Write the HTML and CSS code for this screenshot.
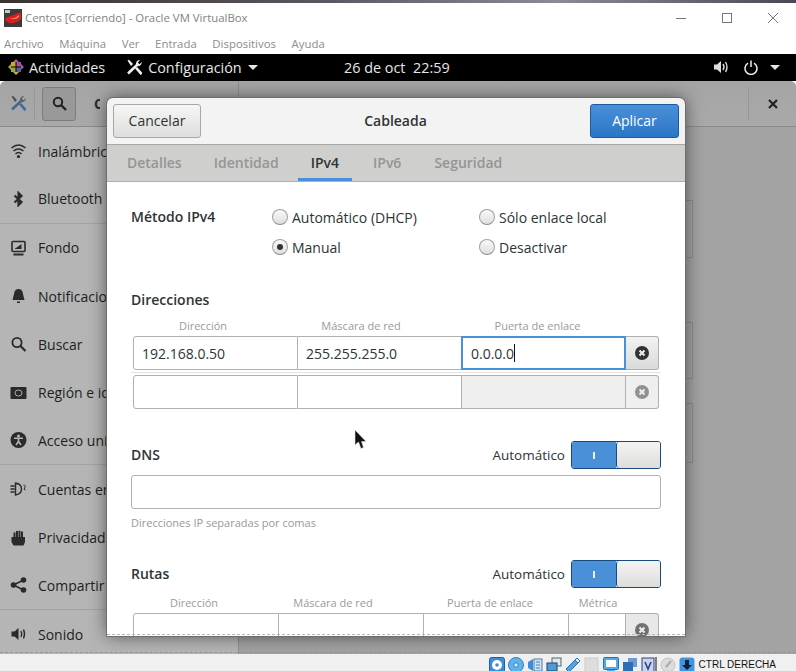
FILE: index.html
```html
<!DOCTYPE html>
<html lang="es">
<head>
    <meta charset="UTF-8">
    <meta name="viewport" content="width=device-width, initial-scale=1.0">
    <title>Centos [Corriendo] - Oracle VM VirtualBox</title>
    <link rel="stylesheet" href="styles.css">
</head>
<body>
    <div class="vm">
        <div class="wallpaper"></div>

        <div class="titlebar">
            <svg class="vbox-logo" width="18" height="18" viewBox="0 0 18 18">
                <rect width="18" height="18" fill="#3c3a3a"/>
                <rect x="1" y="1" width="5" height="3" fill="#c9c9c9"/>
                <path d="M1 9 L12 5 L17 3 L17 10 Q12 15 5 14 Q2 13 1 9Z" fill="#d9201c"/>
                <path d="M5 9 Q10 11 15 6 L15 8 Q10 12 5 9Z" fill="#f28a80"/>
            </svg>
            <span class="titlebar-text">Centos [Corriendo] - Oracle VM VirtualBox</span>
            <div class="window-buttons">
                <svg width="12" height="12" viewBox="0 0 12 12"><path d="M1 6.5H11" stroke="#777" fill="none"/></svg>
                <svg width="12" height="12" viewBox="0 0 12 12"><rect x="1.5" y="1.5" width="9" height="9" stroke="#777" fill="none"/></svg>
                <svg width="12" height="12" viewBox="0 0 12 12"><path d="M1 1L11 11M11 1L1 11" stroke="#777" fill="none"/></svg>
            </div>
        </div>

        <div class="menubar">
            <span>Archivo</span>
            <span>Máquina</span>
            <span>Ver</span>
            <span>Entrada</span>
            <span>Dispositivos</span>
            <span>Ayuda</span>
        </div>

        <div class="topbar">
            <div class="topbar-left">
                <svg width="16" height="16" viewBox="0 0 16 16">
                    <path d="M8 0L11 3H5Z" fill="#9b5fa6"/>
                    <path d="M16 8L13 11V5Z" fill="#9b5fa6"/>
                    <path d="M8 16L5 13H11Z" fill="#c9b037"/>
                    <path d="M0 8L3 5V11Z" fill="#8fae3a"/>
                    <rect x="3" y="3" width="4.5" height="4.5" fill="#c9a93a"/>
                    <rect x="8.5" y="3" width="4.5" height="4.5" fill="#a24f9c"/>
                    <rect x="3" y="8.5" width="4.5" height="4.5" fill="#8fae3a"/>
                    <rect x="8.5" y="8.5" width="4.5" height="4.5" fill="#52659e"/>
                </svg>
                <span class="activities">Actividades</span>
                <svg class="app-icon" width="17" height="17" viewBox="0 0 17 17">
                    <path d="M1.5 1.5L3 0.8L7 5L5 7Z" fill="#eee"/>
                    <path d="M9 9.5L11 8L16 13.5Q16.5 15.5 14.5 16Z" fill="#eee"/>
                    <path d="M11 6L2 14.5" stroke="#eee" stroke-width="2.6"/>
                    <path d="M10 6Q9.5 2 13 1L14 1.2L11.8 3.4L13.6 5.2L15.8 3Q16 6.5 12 7.2Z" fill="#eee"/>
                </svg>
                <span>Configuración</span>
                <span class="arrow"></span>
            </div>
            <div class="clock">26 de oct&nbsp; 22:59</div>
            <div class="topbar-right">
                <svg width="16" height="14" viewBox="0 0 16 14">
                    <path d="M0 4.5H3L7 1V13L3 9.5H0Z" fill="#ddd"/>
                    <path d="M9 4Q11 7 9 10M11.5 2Q14.5 7 11.5 12" stroke="#ddd" stroke-width="1.4" fill="none"/>
                </svg>
                <svg class="power" width="14" height="15" viewBox="0 0 14 15">
                    <path d="M4 3.2A6 6 0 1 0 10 3.2M7 0.5V7" stroke="#eee" stroke-width="1.5" fill="none"/>
                </svg>
                <span class="arrow"></span>
            </div>
        </div>

        <div class="guest">
            <div class="settings-header">
                <div class="settings-header-left">
                    <svg width="17" height="17" viewBox="0 0 17 17">
                        <path d="M1.5 1.5L3 0.8L7 5L5 7Z" fill="#4c5258"/>
                        <path d="M9 9.5L11 8L16 13.5Q16.5 15.5 14.5 16Z" fill="#3a6d9e"/>
                        <path d="M11 6L2 14.5" stroke="#47688a" stroke-width="2.6"/>
                        <path d="M10 6Q9.5 2 13 1L14 1.2L11.8 3.4L13.6 5.2L15.8 3Q16 6.5 12 7.2Z" fill="#5b6268"/>
                    </svg>
                    <span class="header-sep"></span>
                    <button class="search-toggle">
                        <svg width="15" height="15" viewBox="0 0 15 15">
                            <circle cx="6" cy="6" r="4.2" stroke="#222" stroke-width="2" fill="none"/>
                            <path d="M9 9L14 14" stroke="#222" stroke-width="2.4"/>
                        </svg>
                    </button>
                    <span class="settings-title">Configuración</span>
                </div>
                <div class="settings-header-right">
                    <span class="header-sep"></span>
                    <svg width="10" height="10" viewBox="0 0 10 10"><path d="M1 1L9 9M9 1L1 9" stroke="#222" stroke-width="2.2"/></svg>
                </div>
            </div>

            <div class="settings-body">
                <ul class="sidebar">
                    <li>
                        <svg width="16" height="14" viewBox="0 0 16 14"><path d="M1 4Q8 -2 15 4M3 7Q8 3 13 7M5 10Q8 7 11 10" stroke="#2a2a2a" stroke-width="1.6" fill="none"/><circle cx="8" cy="12.5" r="1.6" fill="#2a2a2a"/></svg>
                        <span>Inalámbrica</span>
                    </li>
                    <li class="group-end">
                        <svg width="16" height="16" viewBox="0 0 16 16"><path d="M4 4.5L11 11L8 14V2L11 5L4 11.5" stroke="#2a2a2a" stroke-width="2.2" fill="none"/></svg>
                        <span>Bluetooth</span>
                    </li>
                    <li>
                        <svg width="16" height="16" viewBox="0 0 16 16"><rect x="1.5" y="1.5" width="13" height="10" rx="1" stroke="#2a2a2a" stroke-width="1.6" fill="none"/><path d="M4 9L11 9L11 4Z" fill="#2a2a2a"/><rect x="3" y="13.5" width="10" height="2" fill="#2a2a2a"/></svg>
                        <span>Fondo</span>
                    </li>
                    <li>
                        <svg width="16" height="16" viewBox="0 0 16 16"><path d="M8 1Q12 1 12.5 6L14 12H2L3.5 6Q4 1 8 1Z" fill="#2a2a2a"/><rect x="6.5" y="13.5" width="3" height="1.5" fill="#2a2a2a"/></svg>
                        <span>Notificaciones</span>
                    </li>
                    <li>
                        <svg width="16" height="16" viewBox="0 0 16 16"><circle cx="6.5" cy="6.5" r="4.6" stroke="#2a2a2a" stroke-width="1.8" fill="none"/><path d="M10 10L15 15" stroke="#2a2a2a" stroke-width="2.2"/></svg>
                        <span>Buscar</span>
                    </li>
                    <li>
                        <svg width="16" height="14" viewBox="0 0 16 14"><rect y="1" width="16" height="12" rx="1" fill="#2a2a2a"/><ellipse cx="8" cy="7" rx="3.5" ry="3" stroke="#aaa" fill="none"/></svg>
                        <span>Región e idioma</span>
                    </li>
                    <li class="group-end">
                        <svg width="16" height="16" viewBox="0 0 16 16"><circle cx="8" cy="8" r="8" fill="#2a2a2a"/><circle cx="8" cy="4" r="1.5" fill="#b4b4b4"/><path d="M3.5 6.2H12.5M8 6V9.5M8 9.5L5.5 13M8 9.5L10.5 13" stroke="#b4b4b4" stroke-width="1.6"/></svg>
                        <span>Acceso universal</span>
                    </li>
                    <li>
                        <svg width="16" height="14" viewBox="0 0 16 14"><path d="M0 4H4M0 7H4M0 10H4M5 1V13Q11 12 11 7Q11 2 5 1Z" stroke="#2a2a2a" stroke-width="1.4" fill="none"/><path d="M13 3Q16 3 14 6Q13 8 15 8" stroke="#2a2a2a" fill="none"/></svg>
                        <span>Cuentas en línea</span>
                    </li>
                    <li>
                        <svg width="16" height="16" viewBox="0 0 16 16"><path d="M1 7H3V2.5H5V7H5.5V1H7.5V7H8V0.8H10V7H10.5V1.5H12.5V7H14.5V12L13 15.5H3L1 12Z" fill="#2a2a2a"/></svg>
                        <span>Privacidad</span>
                    </li>
                    <li class="group-end">
                        <svg width="16" height="16" viewBox="0 0 16 16"><path d="M13 3L3 8L13 13" stroke="#2a2a2a" stroke-width="1.6" fill="none"/><circle cx="13" cy="3" r="2.8" fill="#2a2a2a"/><circle cx="3" cy="8" r="2.8" fill="#2a2a2a"/><circle cx="13" cy="13" r="2.8" fill="#2a2a2a"/></svg>
                        <span>Compartir</span>
                    </li>
                    <li>
                        <svg width="16" height="14" viewBox="0 0 16 14"><path d="M1 4.5H4L8 1V13L4 9.5H1Z" fill="#2a2a2a"/><path d="M10.5 4Q12 7 10.5 10M13 2.5Q15 7 13 11.5" stroke="#2a2a2a" stroke-width="1.4" fill="none"/></svg>
                        <span>Sonido</span>
                    </li>
                </ul>
                <div class="panel">
                    <div class="panel-card card-one"></div>
                    <div class="panel-card card-two"></div>
                    <div class="panel-card card-three"></div>
                </div>
            </div>

            <div class="dialog">
                <div class="dialog-header">
                    <button class="btn">Cancelar</button>
                    <span class="dialog-title">Cableada</span>
                    <button class="btn btn-apply">Aplicar</button>
                </div>
                <div class="tabs">
                    <span class="tab tab-details">Detalles</span>
                    <span class="tab tab-identity">Identidad</span>
                    <span class="tab tab-active">IPv4</span>
                    <span class="tab tab-ipv6">IPv6</span>
                    <span class="tab tab-security">Seguridad</span>
                </div>
                <div class="dialog-content">
                    <div class="method">
                        <span class="heading method-label">Método IPv4</span>
                        <div class="radio-grid">
                            <label class="radio"><span class="radio-dot"></span>Automático (DHCP)</label>
                            <label class="radio"><span class="radio-dot"></span>Sólo enlace local</label>
                            <label class="radio"><span class="radio-dot radio-on"></span>Manual</label>
                            <label class="radio"><span class="radio-dot"></span>Desactivar</label>
                        </div>
                    </div>

                    <div class="heading addresses-heading">Direcciones</div>
                    <div class="col-heads addr-heads">
                        <span>Dirección</span>
                        <span>Máscara de red</span>
                        <span>Puerta de enlace</span>
                    </div>
                    <div class="addr-row">
                        <div class="cell">192.168.0.50</div>
                        <div class="cell">255.255.255.0</div>
                        <div class="cell cell-focus">0.0.0.0<span class="caret"></span></div>
                        <div class="cell-remove remove-on">
                            <svg width="14" height="14" viewBox="0 0 14 14"><circle cx="7" cy="7" r="7" fill="#2e3436"/><path d="M4.5 4.5L9.5 9.5M9.5 4.5L4.5 9.5" stroke="#eee" stroke-width="2"/></svg>
                        </div>
                    </div>
                    <div class="row-sep"></div>
                    <div class="addr-row">
                        <div class="cell"></div>
                        <div class="cell"></div>
                        <div class="cell cell-off"></div>
                        <div class="cell-remove">
                            <svg width="14" height="14" viewBox="0 0 14 14"><circle cx="7" cy="7" r="7" fill="#8f9192"/><path d="M4.5 4.5L9.5 9.5M9.5 4.5L4.5 9.5" stroke="#eee" stroke-width="2"/></svg>
                        </div>
                    </div>

                    <div class="section-row dns-row">
                        <span class="heading">DNS</span>
                        <div class="auto">
                            <span>Automático</span>
                            <div class="switch"><span class="switch-on"><i></i></span><span class="switch-knob"></span></div>
                        </div>
                    </div>
                    <div class="entry"></div>
                    <div class="hint">Direcciones IP separadas por comas</div>

                    <div class="section-row routes-row">
                        <span class="heading">Rutas</span>
                        <div class="auto">
                            <span>Automático</span>
                            <div class="switch"><span class="switch-on"><i></i></span><span class="switch-knob"></span></div>
                        </div>
                    </div>
                    <div class="col-heads route-heads">
                        <span>Dirección</span>
                        <span>Máscara de red</span>
                        <span>Puerta de enlace</span>
                        <span>Métrica</span>
                    </div>
                    <div class="addr-row route-row">
                        <div class="cell"></div>
                        <div class="cell"></div>
                        <div class="cell"></div>
                        <div class="cell"></div>
                        <div class="cell-remove">
                            <svg width="14" height="14" viewBox="0 0 14 14"><circle cx="7" cy="7" r="7" fill="#6f7173"/><path d="M4.5 4.5L9.5 9.5M9.5 4.5L4.5 9.5" stroke="#eee" stroke-width="2"/></svg>
                        </div>
                    </div>
                </div>
                <div class="dialog-fold"></div>
            </div>

            <svg class="pointer" width="13" height="21" viewBox="0 0 13 21">
                <path d="M1 1V16L4.5 13L7 19.5L9.5 18.5L7.5 12.5L12 12.5Z" fill="#111" stroke="#ddd" stroke-width="0.6"/>
            </svg>
            <div class="guest-fold"></div>
        </div>

        <div class="statusbar">
            <svg width="16" height="16" viewBox="0 0 16 16"><rect x="0.5" y="0.5" width="15" height="15" rx="2" fill="#3b8ddb" stroke="#1c5fa8"/><circle cx="8" cy="8" r="5" fill="#fff"/><circle cx="8" cy="8" r="1.8" fill="#3b8ddb"/></svg>
            <svg width="16" height="16" viewBox="0 0 16 16"><circle cx="8" cy="8" r="7.5" fill="#5fb2ea" stroke="#2f80c4"/><circle cx="8" cy="8" r="2.2" fill="#d7eefc" stroke="#2f80c4"/></svg>
            <svg width="16" height="16" viewBox="0 0 16 16"><path d="M1 5L6 2V14L1 11Z" fill="#3b8ddb"/><rect x="7" y="2" width="8" height="12" fill="#cfe3f3" stroke="#4a7fa8"/><path d="M9 5H13M9 8H13M9 11H13" stroke="#4a7fa8"/></svg>
            <svg width="16" height="16" viewBox="0 0 16 16"><rect x="6" y="1" width="9" height="8" fill="#dfe9f2" stroke="#566"/><rect x="1" y="6" width="10" height="8" fill="#4a9be0" stroke="#245"/></svg>
            <svg width="16" height="16" viewBox="0 0 16 16"><path d="M1 12L10 3L13 6L4 15Z" fill="#4fa3e6" stroke="#2a70ad"/><path d="M10 3L12 1L15 4L13 6Z" fill="#e8f0f6" stroke="#2a70ad"/></svg>
            <svg width="16" height="16" viewBox="0 0 16 16"><rect x="1" y="1" width="13" height="14" fill="#ddd" stroke="#ccc"/></svg>
            <svg width="16" height="16" viewBox="0 0 16 16"><rect x="0.5" y="0.5" width="15" height="12" rx="1" fill="#4fa9ec" stroke="#2a70ad"/><rect x="3" y="3" width="10" height="7" fill="#fff"/><rect x="4" y="13" width="8" height="2" fill="#4fa9ec"/></svg>
            <svg width="16" height="16" viewBox="0 0 16 16"><rect x="6" y="1" width="9" height="9" fill="#6a9ad8"/><rect x="1" y="5" width="10" height="9" fill="#2f6db5"/></svg>
            <svg width="16" height="16" viewBox="0 0 16 16"><rect x="1" y="1" width="12" height="14" fill="#c9d4ee" stroke="#33407e"/><path d="M4 5L7 12L10 5" stroke="#33407e" stroke-width="1.6" fill="none"/><path d="M15 0V16" stroke="#111"/></svg>
            <svg width="16" height="16" viewBox="0 0 16 16"><circle cx="8" cy="8" r="7" fill="#dcdcdc" stroke="#c4c4c4"/><path d="M6 10L11 4" stroke="#aaa" stroke-width="2"/></svg>
            <svg width="16" height="16" viewBox="0 0 16 16"><rect x="0.5" y="0.5" width="15" height="15" rx="3" fill="#3f95e3"/><path d="M6 3H10V8H13L8 13L3 8H6Z" fill="#123"/></svg>
            <span class="host-key">CTRL DERECHA</span>
        </div>
    </div>
</body>
</html>
```

FILE: styles.css
```css
* {
    box-sizing: border-box;
}

body {
    margin: 0;
    font-family: "Open Sans", "Noto Sans", sans-serif;
    background: #fff;
}

.vm {
    width: 796px;
    height: 671px;
    display: flex;
    flex-direction: column;
    overflow: hidden;
}

.wallpaper {
    height: 3px;
    background: linear-gradient(90deg, #3a3330, #5b5560 40%, #8c8a96 70%, #4a4856);
}

.titlebar {
    height: 29px;
    display: flex;
    align-items: center;
    padding-left: 4px;
    background: #fff;
}

.vbox-logo {
    flex: none;
}

.titlebar-text {
    margin-left: 3px;
    font-size: 11.4px;
    color: #85817f;
}

.window-buttons {
    margin-left: auto;
    display: flex;
    gap: 34px;
    padding-right: 17px;
}

.menubar {
    height: 22px;
    display: flex;
    gap: 15.6px;
    align-items: center;
    padding-left: 4px;
    font-size: 11.4px;
    color: #8c8c8c;
    background: #fff;
}

.topbar {
    height: 27px;
    position: relative;
    display: flex;
    align-items: center;
    justify-content: space-between;
    padding-bottom: 1px;
    background: #000;
    color: #e6e6e6;
    font-size: 14.4px;
}

.topbar-left {
    display: flex;
    align-items: center;
    padding-left: 8px;
}

.activities {
    margin-left: 5px;
}

.app-icon {
    margin: 0 5px 0 21px;
}

.arrow {
    width: 0;
    height: 0;
    margin-left: 6px;
    border-left: 5px solid transparent;
    border-right: 5px solid transparent;
    border-top: 5px solid #e6e6e6;
}

.clock {
    position: absolute;
    left: 344px;
}

.topbar-right {
    display: flex;
    align-items: center;
    padding-right: 16px;
}

.power {
    margin-left: 14px;
}

.topbar-right .arrow {
    margin-left: 12px;
}

.guest {
    flex: 1;
    position: relative;
    display: flex;
    flex-direction: column;
    overflow: hidden;
    background: #a3a3a3;
    border-radius: 6px 6px 0 0;
}

.settings-header {
    height: 46px;
    flex: none;
    display: flex;
    justify-content: space-between;
    background: linear-gradient(#a5a5a5, #a9a9a9);
    border-bottom: 1px solid #8a8a8a;
}

.settings-header-left {
    width: 239px;
    display: flex;
    align-items: center;
    gap: 7px;
    padding-left: 10px;
    border-right: 1px solid #8f8f8f;
}

.settings-header-right {
    display: flex;
    align-items: center;
    gap: 19px;
    padding-right: 18px;
}

.header-sep {
    width: 1px;
    height: 33px;
    background: #979797;
}

.search-toggle {
    width: 34px;
    height: 34px;
    display: flex;
    align-items: center;
    justify-content: center;
    padding: 0;
    background: #999;
    border: 1px solid #7c7c7c;
    border-radius: 3px;
}

/* cut off where the dialog starts */
.settings-title {
    width: 6px;
    margin-left: 11px;
    overflow: hidden;
    white-space: nowrap;
    font-size: 14px;
    font-weight: 700;
    color: #2b2b2b;
}

.settings-body {
    flex: 1;
    display: flex;
    min-height: 0;
}

.sidebar {
    width: 239px;
    flex: none;
    margin: 0;
    padding: 0;
    list-style: none;
    background: #b5b5b5;
    border-right: 1px solid #8f8f8f;
}

.sidebar li {
    height: 48.3px;
    display: flex;
    align-items: center;
    gap: 11px;
    padding-left: 10px;
    font-size: 14px;
    color: #1d1f1f;
}

.sidebar li svg {
    flex: none;
    width: 17px;
}

.sidebar li span {
    width: 69px;
    overflow: hidden;
    white-space: nowrap;
}

.sidebar .group-end {
    border-bottom: 1px solid #a3a3a3;
}

.panel {
    flex: 1;
    padding: 73px 104px 0 0;
    display: flex;
    flex-direction: column;
    align-items: flex-end;
}

.panel-card {
    width: 454px;
    border: 1px solid #8c8c8c;
}

.card-one {
    height: 58px;
}

.card-two {
    height: 57px;
    margin-top: 64px;
}

.card-three {
    height: 60px;
    margin-top: 24px;
}

.guest-fold {
    position: absolute;
    left: 0;
    right: 0;
    bottom: 1px;
    border-bottom: 1px dashed #959595;
}

.statusbar {
    height: 17px;
    flex: none;
    display: flex;
    align-items: center;
    justify-content: flex-end;
    gap: 3px;
    padding: 4px 20px 0 0;
    background: #f0f0f0;
    overflow: hidden;
}

.statusbar svg {
    flex: none;
}

.host-key {
    font-size: 10px;
    font-family: "Liberation Sans", sans-serif;
    color: #111;
    margin-left: 1px;
}

/* network dialog on top of the settings window */
.dialog {
    position: absolute;
    left: 107px;
    top: 17px;
    width: 578px;
    height: 538px;
    overflow: hidden;
    background: #fff;
    border-radius: 6px 6px 0 0;
    outline: 1px solid #6e6e6e;
    box-shadow: 0 0 18px rgba(0, 0, 0, 0.55);
}

.dialog-header {
    height: 47px;
    display: flex;
    align-items: center;
    justify-content: space-between;
    padding: 0 6px;
    background: #f3f3f3;
    border-bottom: 1px solid #a8a8a8;
}

.btn {
    width: 88px;
    height: 34px;
    padding: 0 0 2px;
    font-family: inherit;
    font-size: 14px;
    color: #2e3436;
    background: linear-gradient(#f6f6f5, #dededc);
    border: 1px solid #a8a8a8;
    border-radius: 3px;
}

.btn-apply {
    width: 89px;
    color: #fff;
    background: linear-gradient(#4a90d9, #2a76c6);
    border-color: #1b5aa0;
}

.dialog-title {
    padding-bottom: 2px;
    font-size: 14px;
    font-weight: 600;
    color: #2e3436;
}

.tabs {
    height: 37px;
    display: flex;
    align-items: center;
    background: #cfcfcd;
    border-bottom: 1px solid #b0b0b0;
    font-size: 14px;
    font-weight: 600;
    color: #959595;
}

.tab {
    height: 36px;
    line-height: 36px;
}

.tab-details {
    margin-left: 20px;
}

.tab-identity {
    margin-left: 32px;
}

.tab-active {
    margin-left: 19px;
    padding: 0 13px;
    color: #2e3436;
    border-bottom: 3px solid #4a90d9;
}

.tab-ipv6 {
    margin-left: 21px;
}

.tab-security {
    margin-left: 33px;
}

.dialog-content {
    padding: 0 24px;
}

.heading {
    font-size: 14px;
    font-weight: 600;
    color: #2e3436;
}

.method {
    display: flex;
    padding-top: 25px;
}

.method-label {
    width: 141px;
    line-height: 20px;
}

.radio-grid {
    display: grid;
    grid-template-columns: 207px auto;
    row-gap: 10px;
}

.radio {
    display: flex;
    align-items: center;
    gap: 4px;
    height: 20px;
    font-size: 14px;
    color: #2e3436;
}

.radio-dot {
    width: 16px;
    height: 16px;
    display: flex;
    align-items: center;
    justify-content: center;
    border: 1px solid #a0a0a0;
    border-bottom-color: #8c8c8c;
    border-radius: 50%;
    background: linear-gradient(#fafafa, #dededc);
}

.radio-on::after {
    content: "";
    width: 6px;
    height: 6px;
    border-radius: 50%;
    background: #2e3436;
}

.addresses-heading {
    margin-top: 33px;
    line-height: 20px;
}

.col-heads {
    display: grid;
    margin: 7px 0 0 2px;
    height: 19px;
    font-size: 11px;
    line-height: 17px;
    text-align: center;
    color: #9a9a9a;
}

.addr-heads {
    grid-template-columns: 140px 176px 177px;
}

.route-heads {
    grid-template-columns: 122px 156px 158px 58px;
    margin-top: 6px;
}

.addr-row {
    display: grid;
    grid-template-columns: 165px 164px 164px 33px;
    width: 526px;
    height: 34px;
    margin-left: 2px;
    border-radius: 3px;
}

.cell {
    display: flex;
    align-items: center;
    padding-left: 8px;
    font-size: 14px;
    color: #2e3436;
    background: #fff;
    border: 1px solid #b0b0b0;
    border-left: 0;
}

.cell:first-child {
    border-left: 1px solid #b0b0b0;
    border-radius: 3px 0 0 3px;
}

.cell-focus {
    border: 2px solid #4a90d9;
    margin-left: -1px;
}

.cell-off {
    background: #efefef;
}

.caret {
    width: 1px;
    height: 18px;
    background: #111;
}

.cell-remove {
    display: flex;
    align-items: center;
    justify-content: center;
    background: #efefef;
    border: 1px solid #b0b0b0;
    border-left: 0;
    border-radius: 0 3px 3px 0;
}

.remove-on {
    background: linear-gradient(#f2f2f1, #dadad8);
}

.row-sep {
    height: 1px;
    margin: 2px 0;
    background: #e3e3e3;
}

.section-row {
    display: flex;
    align-items: center;
    justify-content: space-between;
}

.section-row .heading {
    padding-bottom: 2px;
}

.dns-row {
    margin-top: 32px;
}

.routes-row {
    margin-top: 28px;
}

.auto {
    display: flex;
    align-items: center;
    gap: 6px;
    font-size: 13.5px;
    color: #2e3436;
}

.switch {
    width: 90px;
    height: 28px;
    display: flex;
    border: 1px solid #184a80;
    border-radius: 3px;
    overflow: hidden;
}

.switch-on {
    width: 44px;
    display: flex;
    align-items: center;
    justify-content: center;
    background: #4a90d9;
}

.switch-on i {
    width: 2px;
    height: 7px;
    background: #e8f0f8;
}

.switch-knob {
    flex: 1;
    background: linear-gradient(#f4f4f3, #dedddb);
    border-left: 1px solid #184a80;
    border-radius: 3px 0 0 3px;
}

.entry {
    height: 34px;
    margin-top: 6px;
    border: 1px solid #b0b0b0;
    border-radius: 3px;
}

.hint {
    margin-top: 5px;
    font-size: 11px;
    line-height: 18px;
    color: #989898;
}

.route-row {
    grid-template-columns: 146px 145px 145px 57px 33px;
    border-radius: 3px 3px 0 0;
}

.route-row .cell-remove {
    background: #e8e8e8;
}

.dialog-fold {
    position: absolute;
    left: 0;
    right: 0;
    bottom: 1px;
    border-bottom: 1px dashed #b8b8b8;
}

.pointer {
    position: absolute;
    left: 354px;
    top: 348px;
}
```
